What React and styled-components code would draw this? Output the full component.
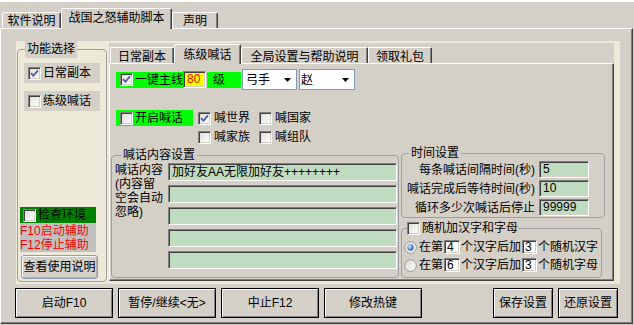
import React from 'react';
import styled, { createGlobalStyle, css } from 'styled-components';

const GlobalStyle = createGlobalStyle`
  html, body { margin: 0; padding: 0; background: #d4d0c8; }
  body {
    font-family: "Liberation Sans", "Noto Sans CJK SC", sans-serif;
    font-size: 12px;
    line-height: 14px;
    color: #000;
  }
  *, *::before, *::after { box-sizing: border-box; }
`;

const sunken = css`
  border: 1px solid;
  border-color: #808080 #fff #fff #808080;
  box-shadow: inset 1px 1px #404040, inset -1px -1px #d4d0c8;
`;

const Window = styled.div`
  width: 634px;
  height: 325px;
  border-top: 2px solid #fff;
  display: flex;
  flex-direction: column;
  overflow: hidden;
`;

const TabStrip = styled.div`
  flex: none;
  display: flex;
  align-items: flex-end;
  height: ${(p) => p.$h}px;
  padding-left: ${(p) => p.$pad}px;
`;

const Tab = styled.div`
  position: relative;
  z-index: ${(p) => (p.$active ? 2 : 1)};
  width: ${(p) => p.$w}px;
  height: ${(p) => (p.$active ? p.$tall : 16)}px;
  margin-bottom: ${(p) => (p.$active ? -1 : 0)}px;
  padding-top: ${(p) => p.$pt || 0}px;
  padding-bottom: ${(p) => p.$pb || 0}px;
  background: #d4d0c8;
  border-top: 1px solid #fff;
  border-left: 1px solid #fff;
  border-right: 1px solid #404040;
  box-shadow: inset -1px 0 #808080;
  border-radius: 2px 2px 0 0;
  display: flex;
  align-items: center;
  justify-content: center;
  white-space: nowrap;
`;

const OuterPanel = styled.div`
  flex: none;
  width: 633px;
  height: 296px;
  border-top: 1px solid #fff;
  border-left: 1px solid #fff;
  border-right: 1px solid #404040;
  border-bottom: 1px solid #404040;
  box-shadow: inset -1px -1px #808080;
  padding: 12px 0 0 15px;
  display: flex;
  flex-direction: column;
`;

const Workspace = styled.div`
  width: 604px;
  height: 243px;
  background: #ece9d8;
  display: flex;
  align-items: flex-start;
  gap: 2px;
  padding: 0 6px 0 1px;
`;

const Group = styled.fieldset`
  margin: 0;
  min-width: 0;
  width: ${(p) => p.$w}px;
  height: ${(p) => p.$h}px;
  padding: 0 ${(p) => p.$pr || 0}px 0 ${(p) => p.$pl || 0}px;
  border: 1px solid #a0a0a0;
  border-radius: 4px;
`;

const Legend = styled.legend`
  margin-left: ${(p) => p.$ml}px;
  padding: 0 ${(p) => (p.$flush ? 0 : 2)}px;
  line-height: ${(p) => p.$lh}px;
  background: ${(p) => p.$bg || 'transparent'};
  display: flex;
  align-items: center;
  gap: 2px;
  white-space: nowrap;
`;

const SideColumn = styled.div`
  height: 223px;
  display: flex;
  flex-direction: column;
`;

const OptionRow = styled.label`
  display: flex;
  align-items: center;
  gap: 2px;
  width: 76px;
  height: 20px;
  margin: ${(p) => p.$mt}px 0 0 6px;
  padding-left: 4px;
  background: #d4d0c8;
`;

const Spacer = styled.div`
  flex: 1;
`;

const CheckEnv = styled.label`
  display: flex;
  align-items: center;
  gap: 2px;
  width: 76px;
  height: 16px;
  margin-left: 2px;
  padding-left: 3px;
  background: #008000;
`;

const HotkeyNote = styled.div`
  width: 76px;
  height: 29px;
  margin-left: 2px;
  padding-top: 1px;
  background: #c0c0c0;
  color: #ff0000;
`;

const HelpButton = styled.button`
  width: 77px;
  height: 24px;
  margin: 3px 0 2px 3px;
  padding: 0;
  font: inherit;
  background: #d4d0c8;
  border: 1px solid #8d9fb8;
  border-radius: 3px;
  box-shadow: inset 1px 1px #fff, inset -1px -1px #b8b4ac;
`;

const TabControl = styled.div`
  width: 505px;
  height: 238px;
  margin-top: 2px;
  background: #d4d0c8;
  display: flex;
  flex-direction: column;
`;

const Page = styled.div`
  flex: 1;
  border-top: 1px solid #fff;
  border-left: 1px solid #fff;
  border-right: 1px solid #404040;
  border-bottom: 1px solid #404040;
  box-shadow: inset -1px -1px #808080;
  display: flex;
  flex-direction: column;
`;

const Row = styled.div`
  display: flex;
  align-items: ${(p) => p.$align || 'center'};
  margin-top: ${(p) => p.$mt}px;
  padding-left: ${(p) => p.$pl || 0}px;
  height: ${(p) => (p.$h ? `${p.$h}px` : 'auto')};
`;

const GreenLabel = styled.label`
  flex: none;
  display: flex;
  align-items: center;
  gap: 2px;
  width: ${(p) => p.$w}px;
  height: 16px;
  margin-left: ${(p) => p.$ml || 0}px;
  padding-left: ${(p) => p.$pl}px;
  background: #00ff00;
  white-space: nowrap;
`;

const LevelInput = styled.div`
  flex: none;
  width: 23px;
  height: 17px;
  ${sunken};
  background: #ffff00;
  color: #ff0000;
  padding-left: 3px;
  line-height: 15px;
`;

const Select = styled.div`
  flex: none;
  width: ${(p) => p.$w}px;
  height: 21px;
  margin-left: ${(p) => p.$ml}px;
  border: 1px solid #7f9db9;
  background: #fff;
  display: flex;
  align-items: center;
  justify-content: space-between;
  padding: 0 5px 0 ${(p) => p.$pl}px;
`;

const ChannelGrid = styled.div`
  display: grid;
  grid-template-columns: 61px auto;
  grid-auto-rows: 16px;
  row-gap: 3px;
  margin-left: 5px;
`;

const CheckItem = styled.label`
  display: flex;
  align-items: center;
  gap: 3px;
  white-space: nowrap;
`;

const Lower = styled.div`
  display: flex;
  align-items: flex-start;
  margin-top: 1px;
  padding-left: 1px;
`;

const MessageBody = styled.div`
  display: flex;
  height: 114px;
`;

const MessageLabel = styled.div`
  width: 53px;
  flex: none;
  white-space: nowrap;
`;

const MessageInputs = styled.div`
  display: flex;
  flex-direction: column;
  gap: 4px;
  width: 229px;
`;

const GreenInput = styled.div`
  height: 18px;
  ${sunken};
  background: #c0dcc0;
  padding-left: 3px;
  line-height: 16px;
  white-space: nowrap;
  overflow: hidden;
`;

const RightColumn = styled.div`
  display: flex;
  flex-direction: column;
  gap: 3px;
  margin-left: 2px;
`;

const TimeGrid = styled.div`
  display: grid;
  grid-template-columns: 133px 50px;
  grid-auto-rows: 17px;
  column-gap: 4px;
  row-gap: 2px;
`;

const TimeLabel = styled.div`
  text-align: right;
  white-space: nowrap;
  align-self: center;
`;

const TimeInput = styled.div`
  ${sunken};
  background: #c0dcc0;
  padding-left: 3px;
  line-height: 15px;
`;

const RandomRows = styled.div`
  display: flex;
  flex-direction: column;
  gap: 2px;
  padding: 4px 0 0 2px;
`;

const RadioRow = styled.label`
  display: flex;
  align-items: center;
  height: 16px;
  white-space: nowrap;
`;

const TinyInput = styled.span`
  width: ${(p) => p.$w}px;
  height: 14px;
  margin: 0 1px;
  ${sunken};
  background: #fff;
  padding-left: 2px;
  line-height: 12px;
`;

const BottomBar = styled.div`
  display: flex;
  gap: 5px;
  margin: 4px 0 0 -1px;
  padding-right: 14px;
`;

const Button = styled.button`
  width: ${(p) => p.$w}px;
  height: 30px;
  margin-left: ${(p) => (p.$push ? 'auto' : '0')};
  padding: 0;
  font: inherit;
  background: #d4d0c8;
  border: 1px solid #000;
  box-shadow: inset 1px 1px #fff, inset -1px -1px #808080;
`;

const BoxFrame = styled.span`
  flex: none;
  width: 13px;
  height: 13px;
  ${sunken};
  background: linear-gradient(135deg, #dcdcd7 0%, #fff 100%);
  display: inline-flex;
  align-items: center;
  justify-content: center;
`;

const Check = ({ on }) => (
  <BoxFrame>
    {on && (
      <svg width="9" height="9" viewBox="0 0 9 9">
        <path d="M1 4.2 L3.4 6.8 L8 1.4" fill="none" stroke="#4b55a0" strokeWidth="1.7" />
      </svg>
    )}
  </BoxFrame>
);

const Radio = ({ on }) => (
  <svg width="13" height="13" viewBox="0 0 13 13" style={{ flex: 'none', marginRight: 2 }}>
    <defs>
      <linearGradient id="rbg" x1="0" y1="0" x2="1" y2="1">
        <stop offset="0" stopColor="#d8d8d2" />
        <stop offset="1" stopColor="#fff" />
      </linearGradient>
      <radialGradient id="rdot" cx="0.35" cy="0.35" r="0.75">
        <stop offset="0" stopColor="#c4e4ff" />
        <stop offset="1" stopColor="#1450b0" />
      </radialGradient>
    </defs>
    <circle cx="6.5" cy="6.5" r="5.8" fill="url(#rbg)" stroke="#9a9a9a" />
    {on && <circle cx="6.5" cy="6.5" r="3.2" fill="url(#rdot)" />}
  </svg>
);

const Arrow = () => (
  <svg width="7" height="4" viewBox="0 0 7 4">
    <path d="M0 0 H7 L3.5 4 Z" fill="#000" />
  </svg>
);

const outerTabs = [
  { label: '软件说明', w: 59 },
  { label: '战国之怒辅助脚本', w: 111, active: true },
  { label: '声明', w: 46 },
];

const innerTabs = [
  { label: '日常副本', w: 64 },
  { label: '练级喊话', w: 67, active: true },
  { label: '全局设置与帮助说明', w: 127 },
  { label: '领取礼包', w: 64 },
];

const messages = ['加好友AA无限加好友++++++++', '', '', '', ''];

const timings = [
  { label: '每条喊话间隔时间(秒)', value: '5' },
  { label: '喊话完成后等待时间(秒)', value: '10' },
  { label: '循环多少次喊话后停止', value: '99999' },
];

const App = () => {
  return (
    <>
      <GlobalStyle />
      <Window>
        <TabStrip $h={26} $pad={2}>
          {outerTabs.map((t) => (
            <Tab key={t.label} $w={t.w} $active={t.active} $tall={21} $pb={t.active ? 2 : 0}>
              {t.label}
            </Tab>
          ))}
        </TabStrip>
        <OuterPanel>
          <Workspace>
            <Group $w={90} $h={241}>
              <Legend $ml={7} $lh={17} $bg="#d4d0c8">功能选择</Legend>
              <SideColumn>
                <OptionRow $mt={5}>
                  <Check on />
                  日常副本
                </OptionRow>
                <OptionRow $mt={8}>
                  <Check />
                  练级喊话
                </OptionRow>
                <Spacer />
                <CheckEnv>
                  <Check />
                  检查环境
                </CheckEnv>
                <HotkeyNote>
                  F10启动辅助
                  <br />
                  F12停止辅助
                </HotkeyNote>
                <HelpButton>查看使用说明</HelpButton>
              </SideColumn>
            </Group>

            <TabControl>
              <TabStrip $h={20} $pad={1}>
                {innerTabs.map((t) => (
                  <Tab key={t.label} $w={t.w} $active={t.active} $tall={20} $pt={t.active ? 1 : 2}>
                    {t.label}
                  </Tab>
                ))}
              </TabStrip>
              <Page>
                <Row $mt={5} $pl={6} $h={21}>
                  <GreenLabel $w={67} $pl={4}>
                    <Check on />
                    一键主线
                  </GreenLabel>
                  <LevelInput>80</LevelInput>
                  <GreenLabel $w={34} $pl={6} $ml={1}>
                    级
                  </GreenLabel>
                  <Select $w={55} $ml={1} $pl={3}>
                    弓手
                    <Arrow />
                  </Select>
                  <Select $w={56} $ml={2} $pl={1}>
                    赵
                    <Arrow />
                  </Select>
                </Row>

                <Row $mt={20} $pl={6} $align="flex-start">
                  <GreenLabel $w={77} $pl={4}>
                    <Check />
                    开启喊话
                  </GreenLabel>
                  <ChannelGrid>
                    <CheckItem>
                      <Check on />
                      喊世界
                    </CheckItem>
                    <CheckItem>
                      <Check />
                      喊国家
                    </CheckItem>
                    <CheckItem>
                      <Check />
                      喊家族
                    </CheckItem>
                    <CheckItem>
                      <Check />
                      喊组队
                    </CheckItem>
                  </ChannelGrid>
                </Row>

                <Lower>
                  <Group $w={288} $h={130} $pl={3} $pr={1} style={{ marginTop: 2 }}>
                    <Legend $ml={6} $lh={15}>喊话内容设置</Legend>
                    <MessageBody>
                      <MessageLabel>
                        喊话内容
                        <br />
                        (内容留
                        <br />
                        空会自动
                        <br />
                        忽略)
                      </MessageLabel>
                      <MessageInputs>
                        {messages.map((m, i) => (
                          <GreenInput key={i}>{m}</GreenInput>
                        ))}
                      </MessageInputs>
                    </MessageBody>
                  </Group>

                  <RightColumn>
                    <Group $w={204} $h={72}>
                      <Legend $ml={7} $lh={15}>时间设置</Legend>
                      <TimeGrid>
                        {timings.map((t) => (
                          <React.Fragment key={t.label}>
                            <TimeLabel>{t.label}</TimeLabel>
                            <TimeInput>{t.value}</TimeInput>
                          </React.Fragment>
                        ))}
                      </TimeGrid>
                    </Group>

                    <Group $w={201} $h={57}>
                      <Legend $ml={5} $lh={14} $flush>
                        <Check />
                        随机加汉字和字母
                      </Legend>
                      <RandomRows>
                        <RadioRow>
                          <Radio on />
                          在第<TinyInput $w={16}>4</TinyInput>个汉字后加<TinyInput $w={15}>3</TinyInput>个随机汉字
                        </RadioRow>
                        <RadioRow>
                          <Radio />
                          在第<TinyInput $w={16}>6</TinyInput>个汉字后加<TinyInput $w={15}>3</TinyInput>个随机字母
                        </RadioRow>
                      </RandomRows>
                    </Group>
                  </RightColumn>
                </Lower>
              </Page>
            </TabControl>
          </Workspace>

          <BottomBar>
            <Button $w={98}>启动F10</Button>
            <Button $w={98}>暂停/继续&lt;无&gt;</Button>
            <Button $w={98}>中止F12</Button>
            <Button $w={98}>修改热键</Button>
            <Button $w={60} $push>
              保存设置
            </Button>
            <Button $w={60}>还原设置</Button>
          </BottomBar>
        </OuterPanel>
      </Window>
    </>
  );
};

export default App;
